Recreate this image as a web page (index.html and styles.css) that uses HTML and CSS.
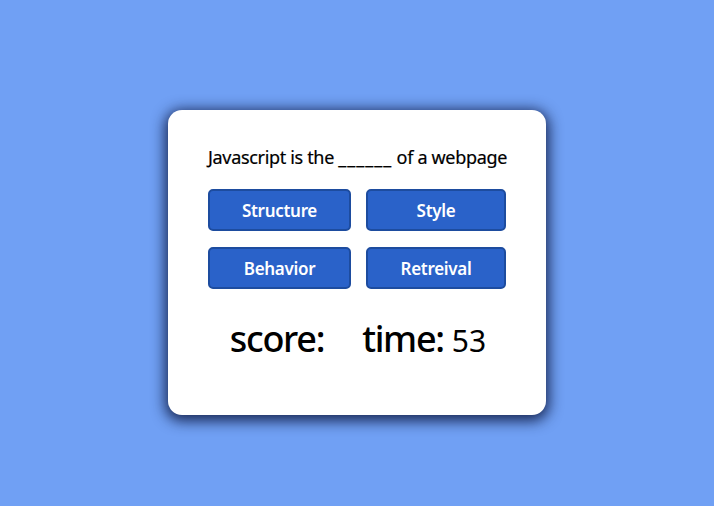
FILE: index.html
```html
<!DOCTYPE html>
<html>
<head>
<meta charset="utf-8">
<link rel="stylesheet" href="styles.css">
</head>
<body>
<main class="page">
  <section class="card">
    <p class="question">Javascript is the <span class="blank">______</span> of a webpage</p>
    <div class="answers">
      <button class="answer">Structure</button>
      <button class="answer">Style</button>
      <button class="answer">Behavior</button>
      <button class="answer">Retreival</button>
    </div>
    <div class="stats">
      <span class="score">score:</span>
      <span class="time">time: <span class="seconds">53</span></span>
    </div>
  </section>
</main>
</body>
</html>
```

FILE: styles.css
```css
html, body {
  margin: 0;
  padding: 0;
  background: #70a0f4;
  height: 100%;
}
.page {
  padding-top: 110px;
  font-family: "Noto Sans", "Open Sans", sans-serif;
}
.card {
  box-sizing: border-box;
  width: 378px;
  height: 305px;
  margin: 0 auto;
  background: #ffffff;
  border-radius: 14px;
  box-shadow: 0 3px 14px 3px rgba(15, 28, 70, 0.9);
  padding: 35px 38px 0 40px;
  display: flex;
  flex-direction: column;
}
.question {
  margin: 0;
  font-size: 18px;
  font-weight: 400;
  line-height: 24px;
  color: #000;
  letter-spacing: -0.33px;
  white-space: nowrap;
  -webkit-text-stroke: 0.2px #000;
}
.blank {
  letter-spacing: 1px;
}
.answers {
  margin-top: 20px;
  display: grid;
  grid-template-columns: 143px 140px;
  grid-auto-rows: 42px;
  column-gap: 15px;
  row-gap: 16px;
}
.answer {
  box-sizing: border-box;
  background: #2a62c9;
  border: 2px solid #1d4c9f;
  border-radius: 5px;
  color: #fff;
  font-family: "Noto Sans", "Open Sans", sans-serif;
  font-weight: 600;
  font-size: 17px;
  letter-spacing: -0.3px;
  padding: 0;
}
.stats {
  margin-top: 30px;
  display: flex;
  justify-content: center;
  align-items: baseline;
  gap: 38px;
  color: #000;
  font-size: 36px;
  font-weight: 500;
  line-height: 40px;
  letter-spacing: -1.3px;
}
.seconds {
  font-size: 30px;
  font-weight: 400;
  letter-spacing: 0;
}
```
